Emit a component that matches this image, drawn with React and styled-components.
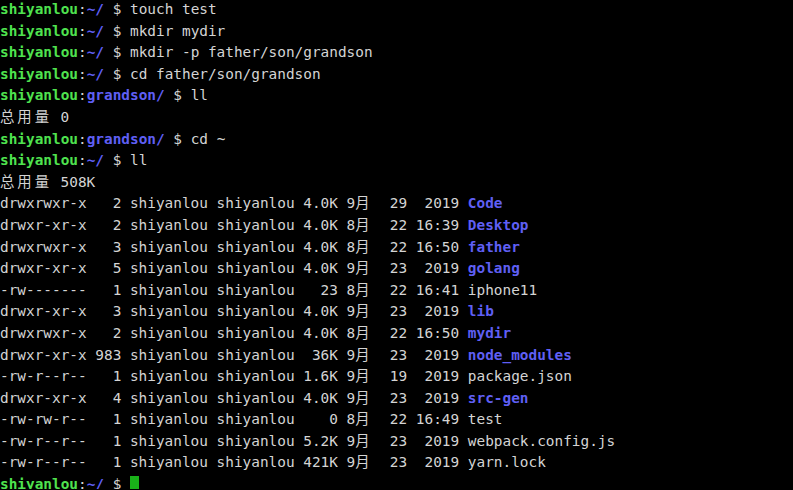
import React from 'react'
import styled, { createGlobalStyle } from 'styled-components'

const GlobalStyle = createGlobalStyle`
  html, body {
    margin: 0;
    padding: 0;
    background: #000;
  }
`

const history = [
  { type: 'cmd', path: '~/', text: 'touch test' },
  { type: 'cmd', path: '~/', text: 'mkdir mydir' },
  { type: 'cmd', path: '~/', text: 'mkdir -p father/son/grandson' },
  { type: 'cmd', path: '~/', text: 'cd father/son/grandson' },
  { type: 'cmd', path: 'grandson/', text: 'll' },
  { type: 'out', text: '总用量 0' },
  { type: 'cmd', path: 'grandson/', text: 'cd ~' },
  { type: 'cmd', path: '~/', text: 'll' },
  { type: 'out', text: '总用量 508K' },
  { type: 'ls', text: 'drwxrwxr-x   2 shiyanlou shiyanlou 4.0K 9月  29  2019 ', name: 'Code', dir: true },
  { type: 'ls', text: 'drwxr-xr-x   2 shiyanlou shiyanlou 4.0K 8月  22 16:39 ', name: 'Desktop', dir: true },
  { type: 'ls', text: 'drwxrwxr-x   3 shiyanlou shiyanlou 4.0K 8月  22 16:50 ', name: 'father', dir: true },
  { type: 'ls', text: 'drwxr-xr-x   5 shiyanlou shiyanlou 4.0K 9月  23  2019 ', name: 'golang', dir: true },
  { type: 'ls', text: '-rw-------   1 shiyanlou shiyanlou   23 8月  22 16:41 ', name: 'iphone11' },
  { type: 'ls', text: 'drwxr-xr-x   3 shiyanlou shiyanlou 4.0K 9月  23  2019 ', name: 'lib', dir: true },
  { type: 'ls', text: 'drwxrwxr-x   2 shiyanlou shiyanlou 4.0K 8月  22 16:50 ', name: 'mydir', dir: true },
  { type: 'ls', text: 'drwxr-xr-x 983 shiyanlou shiyanlou  36K 9月  23  2019 ', name: 'node_modules', dir: true },
  { type: 'ls', text: '-rw-r--r--   1 shiyanlou shiyanlou 1.6K 9月  19  2019 ', name: 'package.json' },
  { type: 'ls', text: 'drwxr-xr-x   4 shiyanlou shiyanlou 4.0K 9月  23  2019 ', name: 'src-gen', dir: true },
  { type: 'ls', text: '-rw-rw-r--   1 shiyanlou shiyanlou    0 8月  22 16:49 ', name: 'test' },
  { type: 'ls', text: '-rw-r--r--   1 shiyanlou shiyanlou 5.2K 9月  23  2019 ', name: 'webpack.config.js' },
  { type: 'ls', text: '-rw-r--r--   1 shiyanlou shiyanlou 421K 9月  23  2019 ', name: 'yarn.lock' },
]

// wide (CJK) characters take two terminal cells
const Cells = ({ text }) => {
  const parts = text.split(/([\u4e00-\u9fff])/)
  return parts.map((p, i) =>
    /[\u4e00-\u9fff]/.test(p) ? <Wide key={i}>{p}</Wide> : p
  )
}

const Prompt = ({ path }) => (
  <>
    <User>shiyanlou</User>:<Path>{path}</Path> ${' '}
  </>
)

const App = () => {
  return (
    <>
      <GlobalStyle />
      <Terminal>
        {history.map((line, i) => (
          <Line key={i}>
            {line.type === 'cmd' && (
              <>
                <Prompt path={line.path} />
                {line.text}
              </>
            )}
            {line.type === 'out' && <Cells text={line.text} />}
            {line.type === 'ls' && (
              <>
                <Cells text={line.text} />
                <Name $dir={line.dir}>{line.name}</Name>
              </>
            )}
          </Line>
        ))}
        <Line>
          <Prompt path="~/" />
          <Cursor />
        </Line>
      </Terminal>
    </>
  )
}

const Terminal = styled.div`
  width: 793px;
  height: 490px;
  overflow: hidden;
  box-sizing: border-box;
  background: #000;
  color: #d4d4d4;
  font-family: "DejaVu Sans Mono", "Noto Sans CJK SC", monospace;
  font-size: 14.4px;
  line-height: 21.6px;
  padding-top: 0;
  margin-top: -1px;
`

const Line = styled.div`
  white-space: pre;
  height: 21.6px;
`

const User = styled.span`
  color: #4fe34f;
  font-weight: 700;
`

const Path = styled.span`
  color: #5f5ff4;
  font-weight: 700;
`

const Name = styled.span`
  color: ${(p) => (p.$dir ? '#5f5ff4' : 'inherit')};
  font-weight: ${(p) => (p.$dir ? 700 : 400)};
`

const Wide = styled.span`
  display: inline-block;
  width: 2ch;
  font-family: "DejaVu Sans Mono", "Noto Sans CJK SC", sans-serif;
`

const Cursor = styled.span`
  display: inline-block;
  width: 8.6px;
  height: 17px;
  background: #19b119;
  vertical-align: -4px;
`

export default App
